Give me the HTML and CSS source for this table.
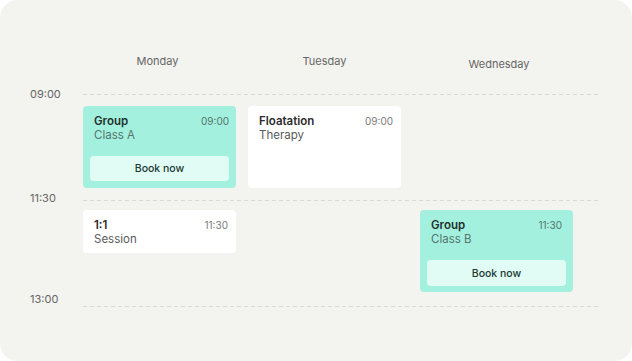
FILE: index.html
```html
<!DOCTYPE html>
<html lang="en">

<head>
    <meta charset="UTF-8">
    <meta name="viewport" content="width=device-width, initial-scale=1.0">
    <title>Class schedule</title>
    <link rel="stylesheet" href="styles.css">
</head>

<body>

<section class="panel">
    <div class="schedule">
        <!-- Wochentage -->
        <div class="day day-mon">Monday</div>
        <div class="day day-tue">Tuesday</div>
        <div class="day day-wed">Wednesday</div>

        <!-- 09:00 -->
        <div class="time row-rule1">09:00</div>
        <div class="rule row-rule1"></div>

        <div class="card card-mint col-mon row-slot1">
            <div class="card-head">
                <div>
                    <div class="card-title">Group</div>
                    <div class="card-sub">Class A</div>
                </div>
                <span class="card-time">09:00</span>
            </div>
            <button class="book">Book now</button>
        </div>

        <div class="card col-tue row-slot1">
            <div class="card-head">
                <div>
                    <div class="card-title">Floatation</div>
                    <div class="card-sub">Therapy</div>
                </div>
                <span class="card-time">09:00</span>
            </div>
        </div>

        <!-- 11:30 -->
        <div class="time time-mid row-rule2">11:30</div>
        <div class="rule row-rule2"></div>

        <div class="card col-mon row-slot2">
            <div class="card-head">
                <div>
                    <div class="card-title">1:1</div>
                    <div class="card-sub">Session</div>
                </div>
                <span class="card-time">11:30</span>
            </div>
        </div>

        <div class="card card-mint card-tall col-wed row-slot2">
            <div class="card-head">
                <div>
                    <div class="card-title">Group</div>
                    <div class="card-sub">Class B</div>
                </div>
                <span class="card-time">11:30</span>
            </div>
            <button class="book">Book now</button>
        </div>

        <!-- 13:00 -->
        <div class="time time-end row-rule3">13:00</div>
        <div class="rule row-rule3"></div>
    </div>
</section>

</body>

</html>
```

FILE: styles.css
```css
body {
    font-family: Inter, "Noto Sans", sans-serif;
    margin: 0;
    padding: 0;
    background-color: #fff;
    color: #333;
}

.panel {
    width: 632px;
    height: 361px;
    background-color: #f3f3ef;
    border-radius: 18px;
    overflow: hidden;
}

.schedule {
    display: grid;
    grid-template-columns: 83px 165px 172px 178px;
    grid-template-rows: 87px 14px 92px 14px 92px 14px;
}

/* Kopfzeile mit den Tagen */
.day {
    grid-row: 1;
    width: 153px;
    margin-top: 54px;
    font-size: 11px;
    line-height: 14px;
    color: #666;
    text-align: center;
    align-self: start;
}

.day-mon {
    grid-column: 2;
    padding-right: 4px;
    box-sizing: border-box;
}

.day-tue {
    grid-column: 3;
}

.day-wed {
    grid-column: 4;
    margin-top: 57px;
    padding-left: 5px;
    box-sizing: border-box;
}

/* Uhrzeiten und gestrichelte Linien */
.time {
    grid-column: 1;
    padding-left: 30px;
    font-size: 11px;
    line-height: 14px;
    color: #666;
    align-self: center;
}

.time-mid {
    margin-bottom: 4px;
}

.time-end {
    margin-bottom: 14px;
}

.rule {
    grid-column: 2 / 5;
    height: 1px;
    align-self: center;
    background-image: linear-gradient(to right, #d9d9d5 4px, transparent 4px);
    background-size: 7px 1px;
}

.row-rule1 { grid-row: 2; }
.row-rule2 { grid-row: 4; }
.row-rule3 { grid-row: 6; }

.row-slot1 {
    grid-row: 3;
    margin-top: 5px;
    margin-bottom: 5px;
}

.row-slot2 {
    grid-row: 5;
    margin-top: 3px;
    align-self: start;
}

.col-mon { grid-column: 2; }
.col-tue { grid-column: 3; }
.col-wed { grid-column: 4; }

/* Karten */
.card {
    width: 153px;
    box-sizing: border-box;
    padding: 8px 8px 7px 11px;
    background-color: #fff;
    border-radius: 4px;
    display: flex;
    flex-direction: column;
}

.card-mint {
    background-color: #a4f0de;
    padding-left: 7px;
    padding-right: 7px;
}

.card-mint .card-head {
    padding-left: 4px;
    padding-right: 0;
}

.card-tall {
    height: 82px;
    padding-bottom: 6px;
}

.card-tall .card-head {
    padding-right: 4px;
}

.card-head {
    display: flex;
    justify-content: space-between;
    align-items: flex-start;
}

.card-title {
    font-size: 11.5px;
    font-weight: 600;
    line-height: 14px;
    color: #2a2a2a;
}

.card-sub {
    font-size: 11.5px;
    line-height: 14px;
    color: #5a5a5a;
}

.card-time {
    font-size: 10px;
    line-height: 14px;
    color: #7a7a7a;
}

.card-mint .card-title {
    color: #1f322d;
}

.card-mint .card-sub,
.card-mint .card-time {
    color: #52756d;
}

.book {
    margin-top: auto;
    height: 25px;
    width: 100%;
    border: none;
    border-radius: 4px;
    background-color: #e0fcf5;
    font-family: Inter, "Noto Sans", sans-serif;
    font-size: 10.5px;
    font-weight: 500;
    color: #213833;
}

.card-tall .book {
    height: 26px;
}
```
